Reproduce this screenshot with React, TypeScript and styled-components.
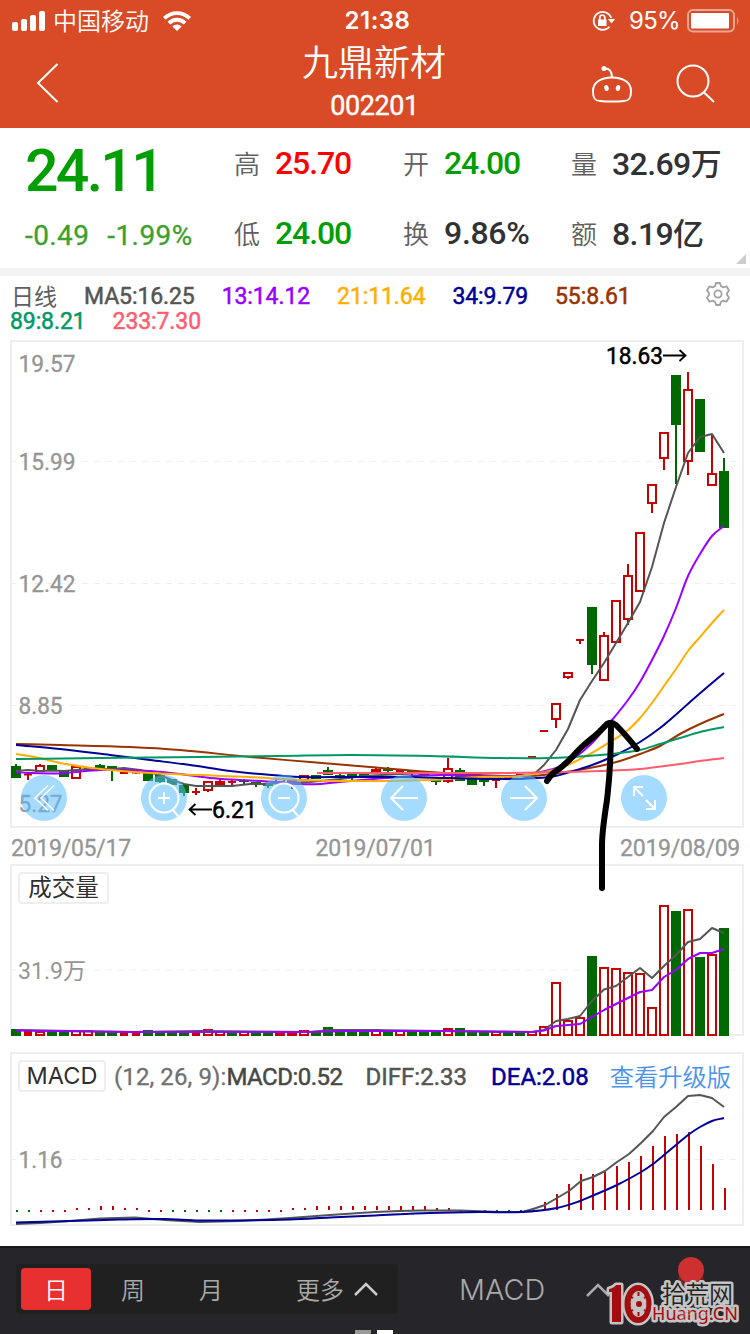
import React from "react";
import styled, { createGlobalStyle } from "styled-components";

const NUM = `Roboto, "Noto Sans CJK SC", sans-serif`;
const CJK = `"Noto Sans CJK SC", sans-serif`;
const UI = `Inter, "Noto Sans CJK SC", sans-serif`;

const RED = "#c80000";
const GREEN = "#006800";

const GlobalStyle = createGlobalStyle`
  * { box-sizing: border-box; }
  body { margin: 0; background: #fff; font-family: ${NUM}; }
  svg { display: block; overflow: visible; }
`;

const Page = styled.div`
  position: relative;
  width: 750px;
  height: 1334px;
  overflow: hidden;
  display: flex;
  flex-direction: column;
  background: #fff;
`;

/* ---------- header ---------- */

const Header = styled.header`
  height: 128px;
  background: #d94b26;
  color: #fff;
`;

const StatusBar = styled.div`
  height: 40px;
  display: grid;
  grid-template-columns: 1fr auto 1fr;
  align-items: center;
  padding: 0 10px 0 12px;
  font: 400 24px/40px ${UI};
`;

const Carrier = styled.div`
  display: flex;
  align-items: center;
  gap: 7px;
  span { font: 350 24px/38px ${CJK}; height: 40px; }
  svg:last-child { margin-left: 7px; }
`;

const Clock = styled.div`
  font-weight: 600;
  font-size: 24px;
  letter-spacing: 0.5px;
  padding: 1px 0 0 3px;
`;

const StatusRight = styled.div`
  display: flex;
  align-items: center;
  justify-content: flex-end;
  gap: 7px;
  span { margin-left: 7px; padding-top: 1px; letter-spacing: -0.7px; font-size: 24px; }
`;

const NavBar = styled.div`
  height: 88px;
  display: flex;
  align-items: center;
  padding: 0 34px 0 36px;
`;

const Side = styled.div<{ $end?: boolean }>`
  flex: 1;
  display: flex;
  align-items: center;
  gap: 43px;
  justify-content: ${(p) => (p.$end ? "flex-end" : "flex-start")};
`;

const TitleBlock = styled.div`
  display: flex;
  flex-direction: column;
  align-items: center;
  height: 88px;
  margin: 0 2px 0 -2px;
`;

const StockName = styled.h1`
  margin: 0;
  height: 44px;
  font: 350 36px/40px ${CJK};
`;

const StockCode = styled.div`
  font: 400 27px/44px ${NUM};
  letter-spacing: -0.4px;
  padding: 4px 0 0 1px;
  -webkit-text-stroke: 0.4px currentColor;
`;

/* ---------- quote ---------- */

const Quote = styled.section`
  position: relative;
  height: 140px;
  display: grid;
  grid-template-columns: 210px 169px 168px 1fr;
  grid-template-rows: 70px 70px;
  align-items: center;
  padding-left: 24px;
`;

const Price = styled.div`
  font: 500 59px/60px ${NUM};
  letter-spacing: -2.7px;
  color: #009e00;
  padding: 16px 0 0 1px;
`;

const Change = styled.div`
  display: flex;
  gap: 18px;
  padding: 5px 0 0 1px;
  font: 400 28px/40px ${NUM};
  letter-spacing: 0.4px;
  color: #3da02a;
  -webkit-text-stroke: 0.3px currentColor;
`;

const Stat = styled.div`
  display: flex;
  align-items: center;
  height: 70px;
`;

const StatLabel = styled.span`
  width: 41px;
  font: 350 26px/40px ${CJK};
  margin-top: -1px;
  color: #606060;
`;

const StatValue = styled.span<{ $color?: string; $spacing?: number }>`
  font: 500 32px/40px ${NUM};
  letter-spacing: ${(p) => p.$spacing ?? -0.6}px;
  color: ${(p) => p.$color ?? "#303236"};
`;

const Unit = styled.span`
  font: 500 31px/38px ${CJK};
`;

const Corner = styled.i`
  position: absolute;
  right: 4px;
  bottom: 4px;
  border-left: 10px solid transparent;
  border-bottom: 10px solid #ccc;
`;

const Strip = styled.div`
  height: 8px;
  background: #f4f4f4;
`;

/* ---------- averages legend ---------- */

const Legend = styled.section`
  height: 64px;
  display: flex;
  justify-content: space-between;
  padding: 7px 20px 0 10px;
`;

const LegendRow = styled.div`
  display: flex;
  height: 25px;
  align-items: center;
  gap: 27px;
`;

const LegendItem = styled.span<{ $color: string }>`
  padding-top: 2px;
  font: 400 23px/25px ${NUM};
  letter-spacing: -0.1px;
  color: ${(p) => p.$color};
  -webkit-text-stroke: 0.5px currentColor;
`;

const Period = styled.span`
  font: 400 23px/23px ${CJK};
  padding-left: 1px;
  color: #606060;
`;

/* ---------- panels ---------- */

const Panel = styled.section<{ $h: number; $open?: boolean; $mt?: number }>`
  position: relative;
  flex: none;
  height: ${(p) => p.$h}px;
  width: 734px;
  margin: ${(p) => p.$mt ?? 0}px 0 0 10px;
  border: 2px solid #eee;
  ${(p) => (p.$open ? "border-bottom: 0;" : "")}
`;

const Dates = styled.div`
  height: 36px;
  display: flex;
  justify-content: space-between;
  align-items: center;
  padding: 5px 10px 0 11px;
  font: 400 23px/30px ${NUM};
  letter-spacing: -0.25px;
  color: #959595;
  -webkit-text-stroke: 0.3px currentColor;
`;

const Tools = styled.div`
  position: absolute;
  left: 9px;
  bottom: 5px;
  display: flex;
  gap: 74px;
`;

const Tool = styled.button`
  width: 46px;
  height: 46px;
  padding: 0;
  border: 0;
  border-radius: 50%;
  background: rgba(91, 190, 255, 0.55);
  stroke: #fff;
  fill: none;
`;

const PanelHead = styled.div`
  display: flex;
  align-items: center;
  height: 38px;
  padding: 5px 0 0 6px;
  white-space: nowrap;
`;

const Tag = styled.div<{ $w: number }>`
  width: ${(p) => p.$w}px;
  height: 32px;
  flex: none;
  display: flex;
  align-items: center;
  justify-content: center;
  padding-top: 1px;
  border: 2px solid #eee;
  border-radius: 4px;
  font: 400 23.5px/28px ${UI};
  color: #303030;
`;

const MacdValue = styled.span<{ $color: string; $bold?: number; $ml: number; $spacing?: number }>`
  margin-left: ${(p) => p.$ml}px;
  padding-top: 2px;
  font: 400 24px/32px ${NUM};
  letter-spacing: ${(p) => p.$spacing ?? 0}px;
  color: ${(p) => p.$color};
  -webkit-text-stroke: ${(p) => p.$bold ?? 0.5}px currentColor;
`;

const Upgrade = styled.a`
  margin-left: 21px;
  font: 350 24.3px/30px ${CJK};
  color: #4a92ec;
`;

/* ---------- footer ---------- */

const Footer = styled.footer`
  position: relative;
  margin-top: auto;
  height: 88px;
  display: flex;
  align-items: flex-start;
  padding: 16px 0 0 16px;
  border-top: 2px solid #1a1a1d;
  background: #26252a;
  color: #aaa;
`;

const Periods = styled.div`
  width: 382px;
  height: 50px;
  display: flex;
  align-items: center;
  padding: 0 20px 0 5px;
  border-radius: 4px;
  background: #202020;
`;

const PeriodTab = styled.button<{ $active?: boolean; $w: number }>`
  width: ${(p) => p.$w}px;
  height: 42px;
  padding: 0;
  border: 0;
  border-radius: 4px;
  background: ${(p) => (p.$active ? "#e93030" : "transparent")};
  color: ${(p) => (p.$active ? "#fff" : "#aaa")};
  font: 350 24px/42px ${CJK};
`;

const More = styled.div`
  margin-left: auto;
  display: flex;
  align-items: center;
  gap: 10px;
  font: 350 24px/42px ${CJK};
`;

const Indicator = styled.div`
  margin-left: 61px;
  height: 52px;
  display: flex;
  align-items: center;
  gap: 41px;
  font: 350 28.8px/54px ${UI};
`;

const Pages = styled.div`
  position: absolute;
  left: 355px;
  bottom: 0;
  display: flex;
  gap: 6px;
`;

const PageMark = styled.i<{ $color: string }>`
  width: 16px;
  height: 4px;
  background: ${(p) => p.$color};
`;

const Stamp = styled.div`
  position: absolute;
  left: 600px;
  bottom: 0;
  width: 150px;
  height: 84px;
`;

const Annotation = styled.div`
  position: absolute;
  left: 540px;
  top: 714px;
  pointer-events: none;
`;

/* ---------- data ---------- */

type Kind = "g" | "r" | "h";
// [kind, body top, body bottom, high, low]; "h" is a hollow rising candle
const candles: [Kind, number, number, number?, number?][] = [
  ["g", 766, 778, 764], ["r", 773.5, 775.5, 773, 780], ["h", 765, 772, 764], ["g", 765, 771],
  ["g", 770, 777], ["h", 766, 779], ["r", 767, 769], ["g", 765, 768, 764],
  ["g", 766, 768, 766, 781], ["r", 772, 774], ["r", 771.5, 773.5], ["g", 773, 781],
  ["g", 775, 782, 775, 783], ["g", 779, 785], ["g", 785, 793, 784, 796], ["r", 791, 793, 788, 795],
  ["h", 781, 791, 781, 792], ["h", 781, 785, 779], ["r", 781, 783, 779, 787], ["g", 780, 782, 779, 784],
  ["g", 782, 785, 782, 787], ["g", 784, 786, 783, 788], ["h", 778, 783], ["h", 780, 783, 780, 789],
  ["h", 775, 781], ["g", 775, 779], ["g", 770, 775, 767], ["g", 775, 777, 774, 780],
  ["g", 773, 776, 772, 780], ["g", 773, 776], ["h", 769, 772, 767], ["g", 769, 771, 767, 772],
  ["r", 770, 772, 769], ["g", 770, 772, 770, 777], ["g", 771, 775], ["g", 779, 782, 779, 785],
  ["h", 768, 782, 758, 783], ["g", 770, 781, 768], ["g", 779, 785], ["g", 780, 782, 779, 786],
  ["r", 779, 781, 779, 788], ["r", 777, 779], ["r", 774, 776], ["r", 756, 758], ["r", 730, 732],
  ["h", 703, 720, 703, 728], ["h", 672, 678, 672, 679], ["r", 639, 641, 639, 644], ["g", 607, 665, 607, 674],
  ["h", 635, 681, 632], ["h", 600, 643], ["h", 575, 620, 564, 625], ["h", 532, 592],
  ["h", 484, 504, 484, 513], ["h", 432, 459, 432, 470], ["g", 375, 425, 375, 484],
  ["h", 389, 462, 372, 475], ["g", 399, 452], ["h", 473, 486, 435], ["g", 471, 528, 458],
];

const volumes: [Kind, number][] = [
  ["g", 1029], ["r", 1031], ["h", 1031], ["g", 1031], ["g", 1031], ["h", 1030], ["h", 1030], ["g", 1031],
  ["g", 1031], ["r", 1032], ["r", 1032], ["g", 1030], ["g", 1032], ["g", 1032], ["g", 1032], ["r", 1032],
  ["h", 1029], ["h", 1031], ["g", 1032], ["h", 1031], ["g", 1032], ["g", 1032], ["h", 1032], ["h", 1032],
  ["h", 1030], ["g", 1031], ["g", 1027], ["g", 1031], ["g", 1031], ["g", 1031], ["h", 1029], ["g", 1030],
  ["h", 1030], ["g", 1031], ["g", 1031], ["g", 1031], ["h", 1028], ["g", 1028], ["g", 1031], ["g", 1031],
  ["h", 1031], ["g", 1032], ["g", 1032], ["h", 1031], ["h", 1026], ["h", 982], ["h", 1020], ["h", 1017],
  ["g", 956], ["h", 967], ["h", 968], ["h", 972], ["h", 973], ["h", 1007], ["h", 905], ["g", 911],
  ["h", 909], ["g", 957], ["h", 954], ["g", 928],
];

// signed bar heights above the zero line
const histogram = [
  -1, -1, 1, 1, 1, 2, 2, 4, 4, 2, 2, 1, 1, -1, -1, -1, -1, -1, 1, 1, 1, 1, 1, 2, 2, 4, 4, 4, 4, 4,
  4, 4, 4, 4, 4, 2, 2, 1, -1, -1, -1, -1, -1, 2, 8, 16, 26, 36, 36, 38, 44, 48, 54, 64, 74, 76, 78, 64, 46, 22,
];

const averages: [string, string][] = [
  ["#993300", "16,744 60,745 130,747 180,750 250,757 310,762 370,767 430,772 480,775 530,776 560,773 600,766 620,761 640,754 660,746 680,734 700,724 724,714"],
  ["#555", "16,771 28,770 40,771 52,770.5 64,771 76,770 88,769 112,769 124,768 140,770 160,775 172,780 184,784 196,786 212,786 232,786 250,784 262,784 310,782 340,779 364,776 400,774 436,773 470,777 500,779 522,779 532,776 544,765 556,750 568,729 580,700 592,681 604,663 616,643 628,623 640,602 652,567 664,523 676,487 688,453 700,437 712,434 724,453"],
  ["#9900ff", "16,772 30,773 60,773.5 76,772 100,770 120,770 150,771 180,774 210,778 240,780 275,782 300,784 320,784 350,781 400,777 440,775 480,776 520,776 545,771 565,764 590,745 612,720 628,700 640,682 652,660 664,636 676,608 688,576 700,554 712,536 724,526"],
  ["#ffae00", "16,754 40,758 60,763 85,767 110,770 150,773 200,775 250,777 300,780 340,781 380,781 430,780 480,777 520,776 560,768 590,754 610,742 628,730 640,718 652,703 664,686 676,669 688,651 700,637 712,623 724,610"],
  ["#000099", "16,745 60,749 110,755 150,760 190,765 230,771 260,774 300,777 350,777 400,777 450,778 500,779 550,777 580,769 600,762 620,753 640,742 660,728 680,711 690,702 705,689 724,673"],
  ["#009966", "16,759 100,758 200,757 280,756 350,755 430,756 500,758 550,758 600,755 620,753 640,750 660,744 680,738 700,732 724,727"],
  ["#ff5c70", "317,773 400,773 500,773 560,772 600,771 640,769 680,764 700,761 724,758"],
];

const cx = (i: number) => 16 + 12 * i;

// cubic path through the points with gentle tangents
function curve(points: string) {
  const p = points.split(" ").map((s) => s.split(",").map(Number));
  let d = `M${p[0][0]} ${p[0][1]}`;
  for (let i = 0; i < p.length - 1; i++) {
    const a = p[Math.max(i - 1, 0)];
    const b = p[i];
    const c = p[i + 1];
    const e = p[Math.min(i + 2, p.length - 1)];
    const slope = (u: number[], v: number[]) => (v[1] - u[1]) / (v[0] - u[0]);
    const h = (c[0] - b[0]) / 3;
    d += `C${b[0] + h} ${b[1] + h * slope(a, c)} ${c[0] - h} ${c[1] - h * slope(b, e)} ${c[0]} ${c[1]}`;
  }
  return d;
}

function Line({ points, color, smooth }: { points: string; color: string; smooth?: boolean }) {
  const d = smooth ? curve(points) : `M${points.replace(/ /g, "L")}`;
  return <path d={d} fill="none" stroke={color} strokeWidth={2} strokeLinejoin="round" />;
}

function Grid({ y }: { y: number }) {
  return <line x1={12} x2={736} y1={y} y2={y} stroke="#eee" strokeWidth={1} strokeDasharray="6 6" strokeDashoffset={2} />;
}

function AxisLabel({ y, w, children }: { y: number; w: number; children: string }) {
  return (
    <text x={18.5} y={y} fontFamily={NUM} fontSize={23} fill="#959595" stroke="#959595" strokeWidth={0.3} textLength={w} lengthAdjust="spacingAndGlyphs">
      {children}
    </text>
  );
}

function Box({ i, kind, top, bottom }: { i: number; kind: Kind; top: number; bottom: number }) {
  const x = cx(i);
  if (kind === "h")
    return (
      <rect x={x - 4} y={top + 1} width={8} height={Math.max(bottom - top - 2, 1)} fill="#fff" stroke={RED} strokeWidth={2} />
    );
  const w = kind === "r" ? 8 : 10;
  return <rect x={x - w / 2} y={top} width={w} height={bottom - top} fill={kind === "g" ? GREEN : RED} />;
}

function PriceChart() {
  return (
    <svg width={730} height={484} viewBox="12 342 730 484">
      {[461.5, 583.5, 705.5].map((y) => <Grid key={y} y={y} />)}
      {candles.map(([kind, top, bottom, high = top, low = bottom], i) => (
        <g key={i}>
          <rect x={cx(i) - 1} y={high} width={2} height={low - high} fill={kind === "g" ? GREEN : RED} />
          <Box i={i} kind={kind} top={top} bottom={bottom} />
        </g>
      ))}
      {averages.map(([color, points]) => <Line key={color} color={color} points={points} smooth={color !== "#555"} />)}
      <AxisLabel y={372} w={57}>19.57</AxisLabel>
      <AxisLabel y={470} w={57}>15.99</AxisLabel>
      <AxisLabel y={592} w={57}>12.42</AxisLabel>
      <AxisLabel y={714} w={44}>8.85</AxisLabel>
      <AxisLabel y={812} w={44}>5.27</AxisLabel>
      <g fontFamily={NUM} fontSize={23} stroke="#000" strokeWidth={0.5}>
        <text x={606} y={363.5} textLength={57} lengthAdjust="spacingAndGlyphs">18.63</text>
        <text x={212} y={817.5} textLength={45} lengthAdjust="spacingAndGlyphs">6.21</text>
      </g>
      <g fill="none" stroke="#000" strokeWidth={1.8}>
        <path d="M663 355.5h22M679.5 350l6 5.5l-6 5.5" />
        <path d="M212 809.5h-22M195.5 804l-6 5.5l6 5.5" />
      </g>
    </svg>
  );
}

function VolumeChart() {
  return (
    <svg width={730} height={132} viewBox="12 904 730 132">
      <line x1={10} x2={744} y1={1035} y2={1035} stroke="#eee" strokeWidth={2} />
      <Grid y={970} />
      {volumes.map(([kind, top], i) => (
        <Box key={i} i={i} kind={kind} top={top} bottom={1036} />
      ))}
      <Line color="#555" points="16,1030 130,1032 200,1031 310,1032 330,1030 370,1030 440,1031 532,1032 544,1030 556,1021 568,1019 580,1016 592,1001 604,989.5 616,986 628,977 640,968 652,978 664,966 676,955 688,942 700,939 712,928 724,933" />
      <Line color="#9900ff" points="16,1030.5 130,1032 310,1032 350,1031 440,1031 532,1032 544,1030.5 556,1026 568,1025 580,1024 604,1010 628,998 640,992 652,990 664,977 676,970 688,959 700,953 712,953 724,949" />
      <text x={18} y={979} fontFamily={NUM} fontSize={23} fill="#959595" textLength={68} lengthAdjust="spacingAndGlyphs">31.9万</text>
    </svg>
  );
}

function MacdChart() {
  return (
    <svg width={730} height={132} viewBox="12 1092 730 132">
      <Grid y={1159.5} />
      {histogram.map((v, i) => (
        <rect
          key={i}
          x={cx(i)}
          y={Math.abs(v) === 1 ? 1210 : 1210 - v}
          width={2}
          height={Math.abs(v) === 1 ? 2 : v}
          fill={v < 0 ? GREEN : RED}
        />
      ))}
      <Line color="#555" points="16,1224 40,1223 70,1221 100,1218.5 135,1217.5 165,1220 200,1222 240,1221 290,1218 330,1215 375,1212 400,1211 420,1210.5 460,1210.5 500,1212 522,1212 533,1209 545,1205 557,1198 569,1191 581,1181 593,1177 605,1171 617,1162 629,1154 641,1143 653,1131 664,1117 676,1107 688,1096 700,1095 712,1098 724,1107" />
      <Line smooth color="#000099" points="16,1222.5 70,1221 120,1219.5 165,1219 200,1220.5 290,1219.5 330,1217.5 375,1215.5 430,1213 480,1212 522,1212 557,1208 580,1201 593,1195.5 617,1185 641,1172 653,1164 664,1155 676,1145 688,1135 700,1127 712,1121 724,1118" />
      <AxisLabel y={1168} w={44}>1.16</AxisLabel>
    </svg>
  );
}

const toolIcons = [
  <path key="back" d="M33 10.5L20 23l13 12.5M27 10.5L14 23l13 12.5" strokeWidth={1.5} />,
  <g key="in"><circle cx={23} cy={23} r={14.5} /><path d="M17 23h12M23 17v12M32 35l5 6" /></g>,
  <g key="out"><circle cx={23} cy={23} r={14.5} /><path d="M17 23h12M32 35l5 6" /></g>,
  <path key="left" d="M37 23H10M22 11L10 23l12 12" />,
  <path key="right" d="M9 23h27M24 11l12 12-12 12" />,
  <path key="full" d="M13 21v-9h9M13 12l9 9M25 25l9 9M34 25v9h-9" />,
];

const legendTop: [string, string][] = [
  ["#555", "MA5:16.25"], ["#9900ff", "13:14.12"], ["#ffae00", "21:11.64"], ["#000099", "34:9.79"], ["#993300", "55:8.61"],
];

const spokes = Array.from({ length: 8 }, (_, k) => k * 45);

export default function App() {
  return (
    <Page>
      <GlobalStyle />
      <Header>
        <StatusBar>
          <Carrier>
            <svg width={34} height={20} fill="#fff">
              <rect x={0} y={11} width={6} height={9} rx={2} />
              <rect x={9} y={8} width={6} height={12} rx={2} />
              <rect x={18} y={4} width={6} height={16} rx={2} />
              <rect x={27} y={0} width={6} height={20} rx={2} />
            </svg>
            <span>中国移动</span>
            <svg width={28} height={20} viewBox="0 0 28 20" fill="none" stroke="#fff" strokeWidth={3.8}>
              <path d="M1.3 7.3a18 18 0 0 1 25.4 0" />
              <path d="M5.9 12.1a11.5 11.5 0 0 1 16.2 0" />
              <path d="M14 20l-4.7-4.5a6.6 6.6 0 0 1 9.4 0z" fill="#fff" stroke="none" />
            </svg>
          </Carrier>
          <Clock>21:38</Clock>
          <StatusRight>
            <svg width={23} height={22} viewBox="0 0 23 22" fill="none" stroke="#fff" strokeWidth={1.7}>
              <path d="M19.2 8A9 9 0 1 0 17.5 16.7" />
              <path d="M16 9h7l-3.5 4.5z" fill="#fff" stroke="none" />
              <rect x={6} y={9.5} width={8.5} height={6.5} fill="#fff" stroke="none" />
              <path d="M7.8 10V7.5a2.5 2.5 0 0 1 5 0V10" />
            </svg>
            <span>95%</span>
            <svg width={53} height={24} viewBox="0 0 53 24">
              <rect x={1} y={1} width={46} height={21.5} rx={5} fill="none" stroke="#eba593" strokeWidth={2} />
              <rect x={4} y={4} width={38} height={15.5} rx={1} fill="#fff" />
              <path d="M50 8q3 3.5 0 8z" fill="#eba593" />
            </svg>
          </StatusRight>
        </StatusBar>
        <NavBar>
          <Side>
            <svg width={22} height={40} fill="none" stroke="#fff" strokeWidth={2}>
              <path d="M21.5 0L2 19l19.5 19" />
            </svg>
          </Side>
          <TitleBlock>
            <StockName>九鼎新材</StockName>
            <StockCode>002201</StockCode>
          </TitleBlock>
          <Side $end>
            <svg width={42} height={38} viewBox="0 0 42 38" fill="none" stroke="#fff" strokeWidth={2}>
              <path d="M21 12.5C33 12.5 40 18 40 26S37.5 36 33 36q-12 1-24 0C4.5 36 2 34 2 26s7-13.5 19-13.5z" />
              <path d="M13.5 3.5C18 3 21 6 21 12" />
              <circle cx={13} cy={3.5} r={2.5} fill="#fff" stroke="none" />
              <ellipse cx={15.5} cy={23} rx={2.2} ry={3} fill="#fff" stroke="none" transform="rotate(-12 15.5 23)" />
              <ellipse cx={27} cy={23} rx={2.2} ry={3} fill="#fff" stroke="none" transform="rotate(12 27 23)" />
            </svg>
            <svg width={40} height={38} viewBox="0 1 40 38" fill="none" stroke="#fff" strokeWidth={2}>
              <circle cx={17} cy={17} r={15.5} />
              <path d="M27.5 28l10.5 10" />
            </svg>
          </Side>
        </NavBar>
      </Header>

      <Quote>
        <Price>24.11</Price>
        <Stat><StatLabel>高</StatLabel><StatValue $color="#ff0000" $spacing={-1.1}>25.70</StatValue></Stat>
        <Stat><StatLabel>开</StatLabel><StatValue $color="#009e00" $spacing={-1.1}>24.00</StatValue></Stat>
        <Stat><StatLabel>量</StatLabel><StatValue>32.69<Unit>万</Unit></StatValue></Stat>
        <Change><span>-0.49</span><span>-1.99%</span></Change>
        <Stat><StatLabel>低</StatLabel><StatValue $color="#009e00" $spacing={-1.1}>24.00</StatValue></Stat>
        <Stat><StatLabel>换</StatLabel><StatValue $spacing={-0.3}>9.86%</StatValue></Stat>
        <Stat><StatLabel>额</StatLabel><StatValue>8.19<Unit>亿</Unit></StatValue></Stat>
        <Corner />
      </Quote>
      <Strip />

      <Legend>
        <div>
          <LegendRow>
            <Period>日线</Period>
            {legendTop.map(([color, text]) => <LegendItem key={text} $color={color}>{text}</LegendItem>)}
          </LegendRow>
          <LegendRow>
            <LegendItem $color="#009966">89:8.21</LegendItem>
            <LegendItem $color="#ff5c70">233:7.30</LegendItem>
          </LegendRow>
        </div>
        <svg width={24} height={24} viewBox="0 1 24 24" fill="none" stroke="#a0a0a0" strokeWidth={1.8} strokeLinejoin="round">
          <path d="M10 1h4l.8 3 2.2 1.3 3.5-1L23 8.5 21 11v2l2 2.5-2.5 4.2-3.5-1-2.2 1.3-.8 3h-4l-.8-3L7 18.7l-3.5 1L1 15.5 3 13v-2L1 8.5l2.5-4.2 3.5 1L9.2 4z" />
          <circle cx={12} cy={12} r={3.6} />
        </svg>
      </Legend>

      <Panel $h={488}>
        <PriceChart />
        <Tools>
          {toolIcons.map((icon, i) => (
            <Tool key={i}><svg width={46} height={46} strokeWidth={2}>{icon}</svg></Tool>
          ))}
        </Tools>
      </Panel>
      <Dates><span>2019/05/17</span><span>2019/07/01</span><span>2019/08/09</span></Dates>

      <Panel $h={172} $open>
        <PanelHead><Tag $w={91}>成交量</Tag></PanelHead>
        <VolumeChart />
      </Panel>

      <Panel $h={174} $mt={16}>
        <PanelHead>
          <Tag $w={88}>MACD</Tag>
          <MacdValue $color="#707070" $bold={0.3} $ml={8} $spacing={0.1}>(12, 26, 9):</MacdValue>
          <MacdValue $color="#484848" $ml={0} $spacing={-0.5}>MACD:0.52</MacdValue>
          <MacdValue $color="#555" $ml={23}>DIFF:2.33</MacdValue>
          <MacdValue $color="#000099" $ml={24}>DEA:2.08</MacdValue>
          <Upgrade>查看升级版</Upgrade>
        </PanelHead>
        <MacdChart />
      </Panel>

      <Footer>
        <Periods>
          <PeriodTab $active $w={70}>日</PeriodTab>
          <PeriodTab $w={84}>周</PeriodTab>
          <PeriodTab $w={72}>月</PeriodTab>
          <More>
            更多
            <svg width={24} height={14} fill="none" stroke="#ccc" strokeWidth={2.5}><path d="M1 13L12 2l11 11" /></svg>
          </More>
        </Periods>
        <Indicator>
          MACD
          <svg width={24} height={14} fill="none" stroke="#aaa" strokeWidth={2.5}><path d="M1 13L12 2l11 11" /></svg>
        </Indicator>
        <Pages><PageMark $color="#999" /><PageMark $color="#fff" /></Pages>
      </Footer>

      <Annotation>
        <svg width={104} height={182} viewBox="540 714 104 182" fill="none" stroke="#000" strokeWidth={6} strokeLinecap="round" strokeLinejoin="round">
          <path d="M547 781Q550 775 556 771C569 763 575 752 585 744Q597 735 607 724Q611 721 616 725Q626 735 637 749" />
          <path d="M611 724C611 770 609 780 607 800Q602 832 602 845L602 888" />
        </svg>
      </Annotation>

      <Stamp>
        <svg width={150} height={84} viewBox="600 1250 150 84">
          <circle cx={691} cy={1281} r={13} fill="#6e2428" />
          <circle cx={691} cy={1270} r={13} fill="#cc3030" />
          <g stroke="#c4c4c4" strokeWidth={5} strokeLinejoin="round" fill="#a30d10" style={{ paintOrder: "stroke" }}>
            <path d="M609 1289q5-1 7-4h5v37h-9v-30h-3z" />
            <ellipse cx={638} cy={1304} rx={13.5} ry={19} />
            <text x={662} y={1303} fontFamily={CJK} fontWeight={350} fontSize={24} fill="#222" textLength={71}>拾荒网</text>
            <text x={652} y={1320} fontFamily={`"Noto Sans", sans-serif`} fontSize={18} textLength={86} lengthAdjust="spacingAndGlyphs">Huang.CN</text>
          </g>
          <text x={676} y={1319} fontFamily={CJK} fontSize={17} fill="#e8e8e8" opacity={0.25}>更多</text>
          <ellipse cx={638.5} cy={1304} rx={8} ry={13} fill="#c4c4c4" />
          {spokes.map((a) => (
            <path key={a} d="M638.5 1292v4" stroke="#a30d10" strokeWidth={2} transform={`rotate(${a} 638.5 1304)`} />
          ))}
          <circle cx={639} cy={1304} r={3} fill="#a30d10" />
        </svg>
      </Stamp>
    </Page>
  );
}
